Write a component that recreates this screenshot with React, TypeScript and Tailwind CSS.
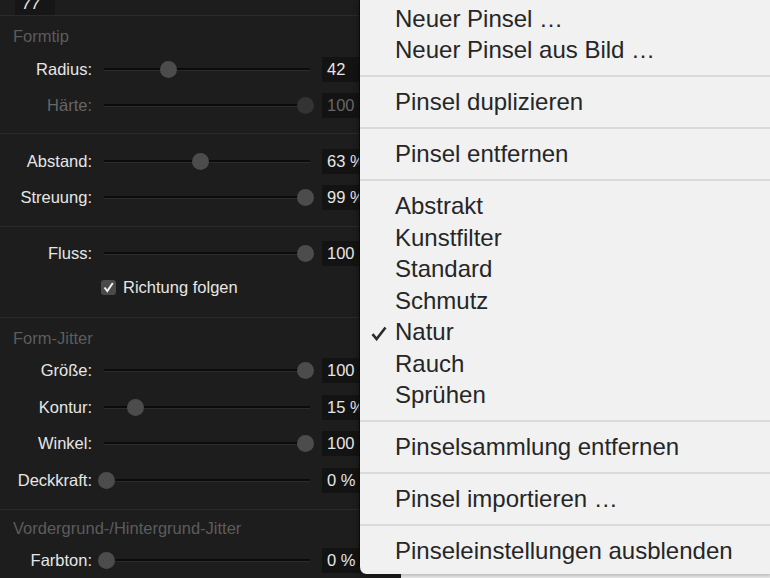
import React from "react"

type Slider = { label: string; pos: number; value: string; dim?: boolean }

function SliderRow({ label, pos, value, dim }: Slider) {
  return (
    <div className="flex h-[36.5px] items-center">
      <div className={`w-[92px] text-right ${dim ? "text-[#666666]" : "text-[#e6e6e6]"}`}>{label}</div>
      <div className="relative ml-[12px] h-[17px] w-[206px]">
        <div className="absolute left-0 right-0 top-[7px] h-[3px] border-b border-[#2c2c2c] bg-[#0b0b0b]" />
        <div
          className={`absolute top-0 h-[17px] w-[17px] rounded-full ${dim ? "bg-[#333333]" : "bg-[#4c4c4c]"}`}
          style={{ left: pos - 104 - 8.5 }}
        />
      </div>
      <div
        className={`ml-[12px] flex h-[25px] flex-1 items-center bg-[#131313] pl-[5px] ${dim ? "text-[#666666]" : "text-[#e6e6e6]"}`}
      >
        {value}
      </div>
    </div>
  )
}

function Header({ children }: { children: React.ReactNode }) {
  return <div className="pl-[13px] text-[16.5px] leading-[16px] text-[#5c5c5c]">{children}</div>
}

function MenuItem({ children, checked }: { children: React.ReactNode; checked?: boolean }) {
  return (
    <div className="relative flex h-[31.5px] items-center pl-[35px]">
      {checked && (
        <svg className="absolute left-[11px] top-[9px]" width="16" height="15" viewBox="0 0 16 15">
          <path d="M1.5 8.2 L5.6 13 L14.5 1.5" fill="none" stroke="#2a2a2a" strokeWidth="2.6" strokeLinejoin="miter" />
        </svg>
      )}
      {children}
    </div>
  )
}

function Sep() {
  return (
    <div className="flex h-[20.5px] items-center">
      <div className="h-[2px] w-full bg-[#dadada]" />
    </div>
  )
}

export default function App() {
  return (
    <div className="relative flex h-[578px] w-[770px] overflow-hidden font-['Liberation_Sans',Arial,sans-serif] text-[16.5px]">
      <div className="w-[401px] bg-[#1d1d1d]">
        <div className="h-[16px] overflow-hidden border-b border-[#2a2a2a]">
          <div className="-mt-[9px] ml-[15px] w-[40px] bg-[#161616] pl-[7px] italic text-[#e6e6e6]">77</div>
        </div>

        <div className="border-b border-[#2a2a2a] pt-[12px] pb-[9px]">
          <Header>Formtip</Header>
          <div className="mt-[7px]">
            <SliderRow label="Radius:" pos={168} value="42" />
            <SliderRow label="Härte:" pos={305} value="100" dim />
          </div>
        </div>

        <div className="border-b border-[#2a2a2a] pt-[9px] pb-[10px]">
          <SliderRow label="Abstand:" pos={200} value="63 %" />
          <SliderRow label="Streuung:" pos={305} value="99 %" />
        </div>

        <div className="border-b border-[#2a2a2a] pt-[8px] pb-[19px]">
          <SliderRow label="Fluss:" pos={305} value="100" />
          <div className="mt-[6px] flex h-[20px] items-center pl-[101px]">
            <div className="flex h-[15px] w-[15px] items-center justify-center rounded-[3px] bg-[#4a4a4a]">
              <svg width="11" height="11" viewBox="0 0 11 11">
                <path d="M1.5 5.5 L4.3 9 L9.8 1" fill="none" stroke="#f0f0f0" strokeWidth="2" />
              </svg>
            </div>
            <span className="ml-[7px] text-[#e6e6e6]">Richtung folgen</span>
          </div>
        </div>

        <div className="border-b border-[#2a2a2a] pt-[12px] pb-[10px]">
          <Header>Form-Jitter</Header>
          <div className="mt-[7px]">
            <SliderRow label="Größe:" pos={305} value="100" />
            <SliderRow label="Kontur:" pos={135} value="15 %" />
            <SliderRow label="Winkel:" pos={305} value="100" />
            <SliderRow label="Deckkraft:" pos={106} value="0 %" />
          </div>
        </div>

        <div className="pt-[10px]">
          <Header>Vordergrund-/Hintergrund-Jitter</Header>
          <div className="mt-[7px]">
            <SliderRow label="Farbton:" pos={106} value="0 %" />
          </div>
        </div>
      </div>
      <div className="flex-1 bg-white" />

      <div className="absolute left-[359px] top-0 h-[574px] w-[415px] rounded-bl-[7px] border-l border-[#0a0a0a] bg-[#f1f1f1] pt-[3px] text-[24px] text-[#262626] shadow-[0_2px_6px_rgba(0,0,0,0.35)]">
        <MenuItem>Neuer Pinsel …</MenuItem>
        <MenuItem>Neuer Pinsel aus Bild …</MenuItem>
        <Sep />
        <MenuItem>Pinsel duplizieren</MenuItem>
        <Sep />
        <MenuItem>Pinsel entfernen</MenuItem>
        <Sep />
        <MenuItem>Abstrakt</MenuItem>
        <MenuItem>Kunstfilter</MenuItem>
        <MenuItem>Standard</MenuItem>
        <MenuItem>Schmutz</MenuItem>
        <MenuItem checked>Natur</MenuItem>
        <MenuItem>Rauch</MenuItem>
        <MenuItem>Sprühen</MenuItem>
        <Sep />
        <MenuItem>Pinselsammlung entfernen</MenuItem>
        <Sep />
        <MenuItem>Pinsel importieren …</MenuItem>
        <Sep />
        <MenuItem>Pinseleinstellungen ausblenden</MenuItem>
      </div>
    </div>
  )
}
